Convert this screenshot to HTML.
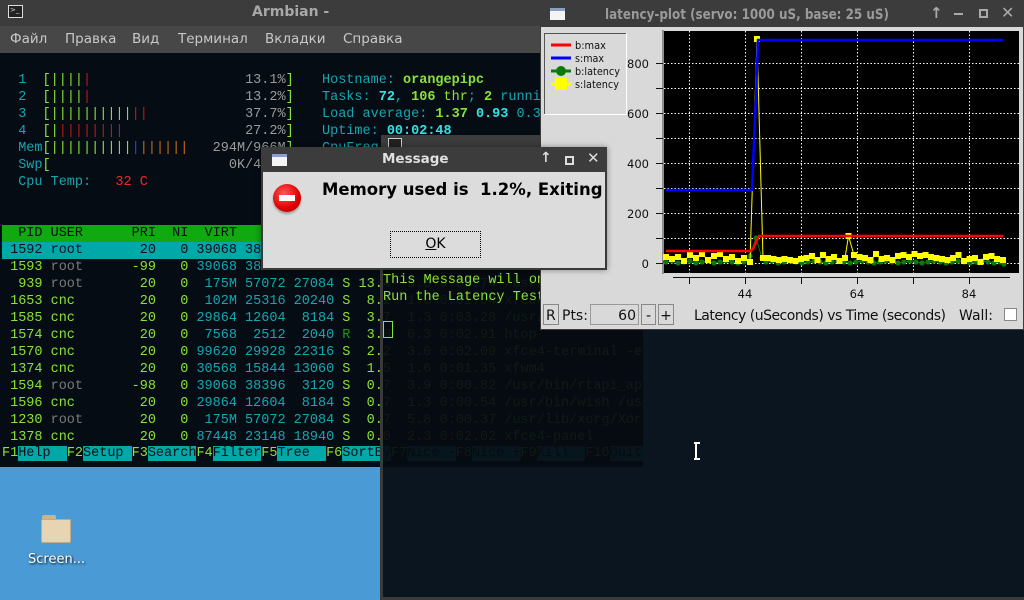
<!DOCTYPE html>
<html><head><meta charset="utf-8"><style>
*{margin:0;padding:0;box-sizing:border-box}
body{width:1024px;height:600px;overflow:hidden;position:relative;background:#4a9ad6;font-family:"DejaVu Sans","Liberation Sans",sans-serif}
.abs{position:absolute}
.mono{font-family:"Liberation Mono","DejaVu Sans Mono",monospace;font-size:13.5px;line-height:17px;white-space:pre;position:absolute;left:2px}
.g{color:#8ae234}.c{color:#16a6b0}.d{color:#7a7a7a}.r{color:#c01818}.o{color:#c46a10}.b{color:#2040ff}.gr{color:#9a9a9a}.gd{color:#1a9a1a}
.bc{color:#34e2e2;font-weight:bold}.bg{color:#8ae234;font-weight:bold}
.fk{color:#8ae234}.fl{background:#00a8a8;color:#061018}
.tb{background:#3c3c3c}
</style></head><body>

<!-- desktop icon -->
<div class="abs" style="left:41px;top:515px;width:30px;height:28px">
<div class="abs" style="left:1px;top:0;width:14px;height:6px;background:#c9b48e;border-radius:2px 2px 0 0"></div>
<div class="abs" style="left:0;top:4px;width:30px;height:24px;background:#e6d4b2;border:1px solid #c2ab85;border-radius:2px"></div>
</div>
<div class="abs" style="left:28px;top:552px;color:#fff;font-size:13px;text-shadow:1px 1px 2px #000">Screen...</div>

<!-- htop terminal -->
<div class="abs" style="left:0;top:0;width:643px;height:467px;background:#050c13;overflow:hidden">
 <div class="abs tb" style="left:0;top:0;width:643px;height:26px"></div>
 <div class="abs" style="left:8px;top:5px;width:15px;height:13px;border:1px solid #ddd;background:#222"><div style="font-size:7px;color:#ddd;line-height:8px;padding-left:1px">&gt;_</div></div>
 <div class="abs" style="left:252px;top:4px;color:#a8a8a8;font-weight:bold;font-size:14px">Armbian -</div>
 <div class="abs" style="left:0;top:26px;width:643px;height:27px;background:#474747;color:#c8c8c8;font-size:13.5px">
  <span class="abs" style="left:10px;top:5px">Файл</span><span class="abs" style="left:65px;top:5px">Правка</span><span class="abs" style="left:132px;top:5px">Вид</span><span class="abs" style="left:178px;top:5px">Терминал</span><span class="abs" style="left:265px;top:5px">Вкладки</span><span class="abs" style="left:343px;top:5px">Справка</span>
 </div>
 <div class="mono" style="top:72px"><span class="c">  1  </span><span class="g">[||||</span><span class="r">|</span>                   <span class="gr">13.1%</span><span class="g">]</span></div>
 <div class="mono" style="top:89px"><span class="c">  2  </span><span class="g">[||||</span><span class="r">|</span>                   <span class="gr">13.2%</span><span class="g">]</span></div>
 <div class="mono" style="top:106px"><span class="c">  3  </span><span class="g">[||||||||||</span><span class="r">||</span>            <span class="gr">37.7%</span><span class="g">]</span></div>
 <div class="mono" style="top:123px"><span class="c">  4  </span><span class="g">[|</span><span class="r">||||||||</span>               <span class="gr">27.2%</span><span class="g">]</span></div>
 <div class="mono" style="top:140px"><span class="c">  Mem</span><span class="g">[||||||||||</span><span class="b">|</span><span class="o">||||||</span>   <span class="gr">294M/966M</span><span class="g">]</span></div>
 <div class="mono" style="top:157px"><span class="c">  Swp</span><span class="g">[</span>                      <span class="gr">0K/496M</span><span class="g">]</span></div>
 <div class="mono" style="top:174px"><span class="c">  Cpu Temp:   </span><span style="color:#ef2929">32 C</span></div>
 <div class="mono" style="left:322px;top:72px"><span class="c">Hostname: </span><span class="bg">orangepipc</span></div>
 <div class="mono" style="left:322px;top:89px"><span class="c">Tasks: </span><span class="bc">72</span><span class="c">, </span><span class="bg">106</span><span class="g"> thr</span><span class="c">; </span><span class="bg">2</span><span class="c"> running</span></div>
 <div class="mono" style="left:322px;top:106px"><span class="c">Load average: </span><span class="bg">1.37</span> <span class="bc">0.93</span> <span class="c">0.35</span></div>
 <div class="mono" style="left:322px;top:123px"><span class="c">Uptime: </span><span class="bc">00:02:48</span></div>
 <div class="mono" style="left:322px;top:140px"><span class="c">CpuFreq: 1008 MHz</span></div>

 <div class="mono" style="top:225px;width:641px;background:#11a811;color:#061018">  PID USER      PRI  NI  VIRT   RES   SHR S CPU% MEM%   TIME+ Command</div>
 <div class="mono" style="top:242px;width:641px;background:#00a8a8;color:#061018"> 1592 root       20   0 39068 38396  3120 S 13.4  3.9 0:02.53 /usr/bin/rtapi_app</div>
 <div class="mono" style="top:259px"><span class="g"> 1593 </span><span class="d">root     </span><span class="g"> -99   0 </span><span class="c">39068 38396  3120</span><span class="g"> S 13.4  3.9 0:02.57 /usr/bin/rtapi_app</span></div>
 <div class="mono" style="top:276px"><span class="g">  939 </span><span class="d">root     </span><span class="g">  20   0 </span><span class="c"> 175M 57072 27084</span><span class="g"> S 13.4  3.0 0:02.74 /usr/lib/xorg/Xorg</span></div>
 <div class="mono" style="top:293px"><span class="g"> 1653 cnc      </span><span class="g">  20   0 </span><span class="c"> 102M 25316 20240</span><span class="g"> S  8.2  1.8 0:01.64 xfce4-terminal</span></div>
 <div class="mono" style="top:310px"><span class="g"> 1585 cnc      </span><span class="g">  20   0 </span><span class="c">29864 12604  8184</span><span class="g"> S  3.7  1.3 0:03.28 /usr/bin/wish</span></div>
 <div class="mono" style="top:327px"><span class="g"> 1574 cnc      </span><span class="g">  20   0 </span><span class="c"> 7568  2512  2040</span><span class="gd"> R</span><span class="g">  3.0  0.3 0:02.91 htop</span></div>
 <div class="mono" style="top:344px"><span class="g"> 1570 cnc      </span><span class="g">  20   0 </span><span class="c">99620 29928 22316</span><span class="g"> S  2.2  3.0 0:02.09 xfce4-terminal -e</span></div>
 <div class="mono" style="top:361px"><span class="g"> 1374 cnc      </span><span class="g">  20   0 </span><span class="c">30568 15844 13060</span><span class="g"> S  1.5  1.6 0:01.35 xfwm4</span></div>
 <div class="mono" style="top:378px"><span class="g"> 1594 </span><span class="d">root     </span><span class="g"> -98   0 </span><span class="c">39068 38396  3120</span><span class="g"> S  0.7  3.9 0:00.82 /usr/bin/rtapi_app</span></div>
 <div class="mono" style="top:395px"><span class="g"> 1596 cnc      </span><span class="g">  20   0 </span><span class="c">29864 12604  8184</span><span class="g"> S  0.7  1.3 0:00.54 /usr/bin/wish /usr</span></div>
 <div class="mono" style="top:412px"><span class="g"> 1230 </span><span class="d">root     </span><span class="g">  20   0 </span><span class="c"> 175M 57072 27084</span><span class="g"> S  0.7  5.8 0:00.37 /usr/lib/xorg/Xorg</span></div>
 <div class="mono" style="top:429px"><span class="g"> 1378 cnc      </span><span class="g">  20   0 </span><span class="c">87448 23148 18940</span><span class="g"> S  0.0  2.3 0:02.02 xfce4-panel</span></div>
 <div class="mono" style="top:445px;left:2px"><span class="fk">F1</span><span class="fl">Help  </span><span class="fk">F2</span><span class="fl">Setup </span><span class="fk">F3</span><span class="fl">Search</span><span class="fk">F4</span><span class="fl">Filter</span><span class="fk">F5</span><span class="fl">Tree  </span><span class="fk">F6</span><span class="fl">SortBy</span><span class="fk">F7</span><span class="fl">Nice -</span><span class="fk">F8</span><span class="fl">Nice +</span><span class="fk">F9</span><span class="fl">Kill  </span><span class="fk">F10</span><span class="fl">Quit  </span></div>
</div>

<!-- second terminal (semi-transparent) -->
<div class="abs" style="left:380px;top:270px;width:644px;height:330px;background:rgba(6,11,17,0.93);border-left:3px solid #3a3a3a;border-bottom:3px solid #3a3a3a">
 <div class="mono" style="left:0;top:2px;color:#8ae234">This Message will only show once
Run the Latency Test</div>
 <div class="abs" style="left:0;top:51px;width:10px;height:17px;border:1px solid #8ae234"></div>
 <div class="abs" style="left:312px;top:172px;width:6px;height:18px;border-left:2px solid #fff;border-right:0"></div>
 <div class="abs" style="left:311px;top:172px;width:6px;height:2px;background:#fff"></div>
 <div class="abs" style="left:311px;top:188px;width:6px;height:2px;background:#fff"></div>
</div>

<!-- small window behind dialog -->
<div class="abs tb" style="left:381px;top:135px;width:160px;height:15px"><div class="abs" style="left:7px;top:3px;width:14px;height:12px;border:1px solid #ccc;background:#222"></div></div>

<!-- latency plot window -->
<div class="abs" style="left:540px;top:0;width:484px;height:330px;background:#d9d9d9;border:1px solid #3c3c3c">
 <div class="abs tb" style="left:0;top:0;width:484px;height:26px"></div>
 <div class="abs" style="left:9px;top:7px;width:15px;height:12px;background:#f4f4f4;border-top:3px solid #8aa0c0"></div>
 <svg class="abs" style="left:60px;top:0" width="290" height="26"><text x="4" y="18" font-family="DejaVu Sans, sans-serif" font-weight="bold" font-size="14" fill="#9a9a9a" textLength="284" lengthAdjust="spacingAndGlyphs">latency-plot (servo: 1000 uS, base: 25 uS)</text></svg>
 <div class="abs" style="left:389px;top:3px;color:#aaa;font-size:15px;font-weight:bold">↑</div>
 <div class="abs" style="left:413px;top:12px;width:9px;height:2px;background:#aaa"></div>
 <div class="abs" style="left:438px;top:8px;width:9px;height:9px;border:2px solid #aaa"></div>
 <div class="abs" style="left:460px;top:2px;color:#aaa;font-size:16px;font-weight:bold">✕</div>
</div>
<svg class="abs" style="left:540px;top:0" width="484" height="330" viewBox="540 0 484 330" font-family="DejaVu Sans, sans-serif">
 <defs>
  <marker id="sq" markerWidth="6" markerHeight="6" refX="3" refY="3" markerUnits="userSpaceOnUse"><rect width="6" height="6" fill="#ffff00"/></marker>
  <marker id="ci" markerWidth="6" markerHeight="6" refX="3" refY="3" markerUnits="userSpaceOnUse"><circle cx="3" cy="3" r="2.6" fill="#0a7a0a"/></marker>
 </defs>
 <rect x="544.5" y="33.5" width="82" height="81" fill="none" stroke="#fff"/>
 <path d="M544.5 114 V33.5 H626" stroke="#555" fill="none"/>
 <line x1="551" y1="45" x2="571" y2="45" stroke="#f00" stroke-width="3"/>
 <line x1="551" y1="58" x2="571" y2="58" stroke="#00f" stroke-width="3"/>
 <line x1="551" y1="71" x2="571" y2="71" stroke="#0a7a0a" stroke-width="3"/><circle cx="561" cy="71" r="5" fill="#0a7a0a"/>
 <line x1="551" y1="84" x2="571" y2="84" stroke="#ff0" stroke-width="3"/><rect x="555" y="78" width="12" height="12" fill="#ff0"/>
 <g font-size="11" fill="#111">
  <text x="575" y="49" textLength="31" lengthAdjust="spacingAndGlyphs">b:max</text><text x="575" y="62" textLength="29" lengthAdjust="spacingAndGlyphs">s:max</text><text x="575" y="75" textLength="45" lengthAdjust="spacingAndGlyphs">b:latency</text><text x="575" y="88" textLength="44" lengthAdjust="spacingAndGlyphs">s:latency</text>
 </g>
 <rect x="664" y="31" width="355" height="242" fill="#000"/>
 <path d="M663 30 V274" stroke="#444"/>
 <g stroke="#fff" stroke-width="1" stroke-dasharray="1.5,2">
  <path d="M689.5 31V273M745.5 31V273M801.5 31V273M857.5 31V273M913.5 31V273M969.5 31V273"/>
  <path d="M664 63.5H1019M664 88.5H1019M664 113.5H1019M664 138.5H1019M664 163.5H1019M664 188.5H1019M664 213.5H1019M664 238.5H1019M664 263.5H1019"/>
 </g>
 <g stroke="#111"><path d="M656 63.5H663M656 88.5H663M656 113.5H663M656 138.5H663M656 163.5H663M656 188.5H663M656 213.5H663M656 238.5H663M656 263.5H663"/>
 <path d="M673 277.5H1010M689.5 277V284M745.5 277V284M801.5 277V284M857.5 277V284M913.5 277V284M969.5 277V284"/></g>
 <g font-size="11.5" fill="#111" text-anchor="end"><text x="649" y="68">800</text><text x="649" y="118">600</text><text x="649" y="168">400</text><text x="649" y="218">200</text><text x="649" y="268">0</text></g>
 <g font-size="11.5" fill="#111" text-anchor="middle"><text x="745" y="298">44</text><text x="857" y="298">64</text><text x="969" y="298">84</text></g>
 <polyline fill="none" stroke="#0a7a0a" stroke-width="1" marker-start="url(#ci)" marker-mid="url(#ci)" marker-end="url(#ci)" points="666,262 672,261 678,263 684,262 690,261 696,263 702,262 708,261 714,263 720,262 726,261 732,262 738,263 744,262 750,256 756,238 762,258 766,262 772,261 778,263 784,262 790,261 796,262 802,263 808,262 814,261 820,262 826,263 832,262 838,261 844,262 850,263 856,262 862,261 868,262 874,263 880,262 886,261 892,262 898,263 904,262 910,261 916,262 922,263 928,262 934,261 940,262 946,263 952,262 958,261 964,262 970,263 976,262 982,261 988,262 994,263 1000,262 1004,264"/>
 <polyline fill="none" stroke="#ff0" stroke-width="1" marker-start="url(#sq)" marker-mid="url(#sq)" marker-end="url(#sq)" points="666,257 672,259 678,257 684,261 690,255 696,258 702,254 708,260 714,256 720,254 726,259 732,257 738,261 744,258 750,262 757,39 763,258 768,258 773.5,259 779,260 784.5,259 790,260 795.5,261 801,259 806.5,258 812,256 817.5,260 823,255 828.5,259 834,257 839.5,261 845,258 848.5,236 854,255 859.5,257 865,258 870.5,260 876,254 881.5,259 887,258 892.5,260 898,256 903.5,255 909,257 914.5,254 920,256 925.5,255 931,257 936.5,258 942,259 947.5,260 953,258 958.5,255 964,261 969.5,259 975,258 980.5,262 986,257 991.5,256 997,259 1003,260"/>
 <polyline fill="none" stroke="#f00" stroke-width="2.5" points="666,251 750,251 753,249 757,240 759,236 1003,236"/>
 <polyline fill="none" stroke="#00f" stroke-width="2.5" points="666,190 752,190 753,166 754,141 755,117 756,100 757,66 758,40 1003,40"/>
 <rect x="543.5" y="304.5" width="15" height="20" fill="#d9d9d9" stroke="#888"/><text x="546" y="320" font-size="14" fill="#111">R</text>
 <text x="562" y="320" font-size="14" fill="#111">Pts:</text>
 <rect x="590.5" y="304.5" width="48" height="20" fill="#d9d9d9" stroke="#999"/><text x="636" y="320" font-size="14" fill="#111" text-anchor="end">60</text>
 <rect x="641.5" y="304.5" width="14" height="20" fill="#d9d9d9" stroke="#888"/><text x="648.5" y="320" font-size="14" fill="#111" text-anchor="middle">-</text>
 <rect x="658.5" y="304.5" width="15" height="20" fill="#d9d9d9" stroke="#888"/><text x="666" y="320" font-size="14" fill="#111" text-anchor="middle">+</text>
 <text x="694" y="320" font-size="14" fill="#111" textLength="252">Latency (uSeconds) vs Time (seconds)</text>
 <text x="959" y="320" font-size="14" fill="#111">Wall:</text>
 <rect x="1004.5" y="308.5" width="12" height="12" fill="#fff" stroke="#888"/>
</svg>

<!-- message dialog -->
<div class="abs" style="left:261px;top:147px;width:346px;height:123px;background:#dcdcdc;border:2px solid #3a3a3a;border-top:0;box-shadow:0 0 6px rgba(0,0,0,.4)">
 <div class="abs tb" style="left:-2px;top:0;width:346px;height:25px"></div>
 <div class="abs" style="left:9px;top:7px;width:15px;height:12px;background:#f4f4f4;border-top:3px solid #8aa0c0"></div>
 <div class="abs" style="left:119px;top:4px;color:#e0e0e0;font-weight:bold;font-size:13.5px">Message</div>
 <div class="abs" style="left:277px;top:3px;color:#ddd;font-size:14px;font-weight:bold">↑</div>
 <div class="abs" style="left:302px;top:9px;width:9px;height:9px;border:2px solid #ddd"></div>
 <div class="abs" style="left:324px;top:2px;color:#ddd;font-size:15px;font-weight:bold">✕</div>
 <div class="abs" style="left:10px;top:37px;width:28px;height:28px;border-radius:50%;background:radial-gradient(circle at 40% 35%,#ff5a5a,#d00 60%,#a00);box-shadow:0 2px 2px rgba(0,0,0,.3)"></div>
 <div class="abs" style="left:16px;top:48px;width:16px;height:6px;background:#fff"></div>
 <div class="abs" style="left:59px;top:33px;font-weight:bold;font-size:16.5px;color:#000;white-space:pre">Memory used is  1.2%, Exiting</div>
 <div class="abs" style="left:127px;top:84px;width:91px;height:27px;border:1px dotted #000;background:#dcdcdc;text-align:center;line-height:25px;font-size:14px;color:#000"><u>O</u>K</div>
</div>
</body></html>
